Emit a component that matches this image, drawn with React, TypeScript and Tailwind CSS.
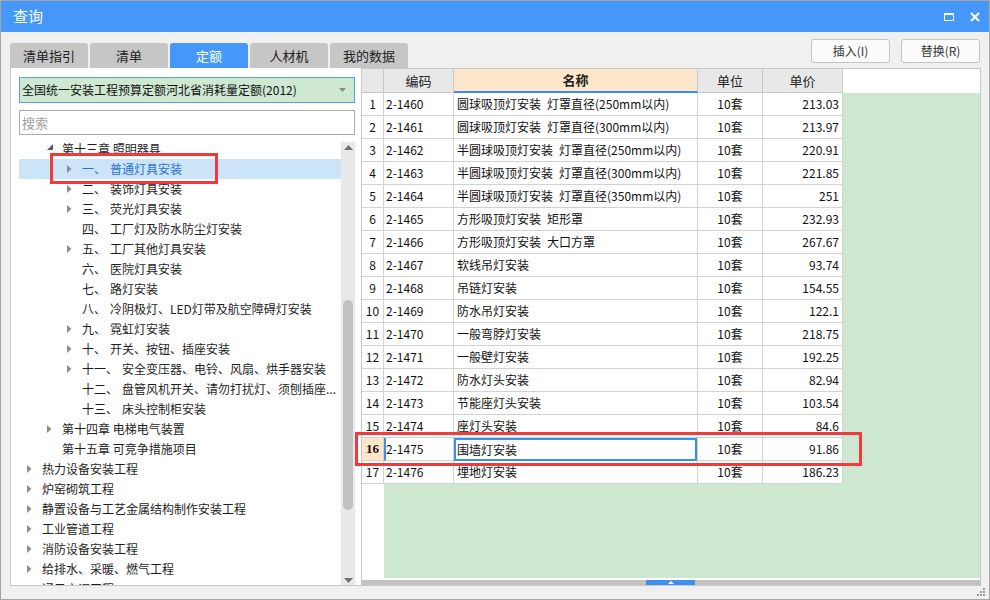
import React from 'react';

interface TreeItem {
  level: 0 | 1 | 2;
  label?: string;
  text: string;
  arrow?: 'right' | 'down';
  selected?: boolean;
}

const treeItems: TreeItem[] = [
  { level: 1, text: '第十三章 照明器具', arrow: 'down' },
  { level: 2, label: '一、', text: '普通灯具安装', arrow: 'right', selected: true },
  { level: 2, label: '二、', text: '装饰灯具安装', arrow: 'right' },
  { level: 2, label: '三、', text: '荧光灯具安装', arrow: 'right' },
  { level: 2, label: '四、', text: '工厂灯及防水防尘灯安装' },
  { level: 2, label: '五、', text: '工厂其他灯具安装', arrow: 'right' },
  { level: 2, label: '六、', text: '医院灯具安装' },
  { level: 2, label: '七、', text: '路灯安装' },
  { level: 2, label: '八、', text: '冷阴极灯、LED灯带及航空障碍灯安装' },
  { level: 2, label: '九、', text: '霓虹灯安装', arrow: 'right' },
  { level: 2, label: '十、', text: '开关、按钮、插座安装', arrow: 'right' },
  { level: 2, label: '十一、', text: '安全变压器、电铃、风扇、烘手器安装', arrow: 'right' },
  { level: 2, label: '十二、', text: '盘管风机开关、请勿打扰灯、须刨插座...' },
  { level: 2, label: '十三、', text: '床头控制柜安装' },
  { level: 1, text: '第十四章 电梯电气装置', arrow: 'right' },
  { level: 1, text: '第十五章 可竞争措施项目' },
  { level: 0, text: '热力设备安装工程', arrow: 'right' },
  { level: 0, text: '炉窑砌筑工程', arrow: 'right' },
  { level: 0, text: '静置设备与工艺金属结构制作安装工程', arrow: 'right' },
  { level: 0, text: '工业管道工程', arrow: 'right' },
  { level: 0, text: '消防设备安装工程', arrow: 'right' },
  { level: 0, text: '给排水、采暖、燃气工程', arrow: 'right' },
  { level: 0, text: '通风空调工程', arrow: 'right' },
];

// names use an en space, close to the wide space of the original grid font
const rows = [
  ['2-1460', '圆球吸顶灯安装\u2002灯罩直径(250mm以内)', '213.03'],
  ['2-1461', '圆球吸顶灯安装\u2002灯罩直径(300mm以内)', '213.97'],
  ['2-1462', '半圆球吸顶灯安装\u2002灯罩直径(250mm以内)', '220.91'],
  ['2-1463', '半圆球吸顶灯安装\u2002灯罩直径(300mm以内)', '221.85'],
  ['2-1464', '半圆球吸顶灯安装\u2002灯罩直径(350mm以内)', '251'],
  ['2-1465', '方形吸顶灯安装\u2002矩形罩', '232.93'],
  ['2-1466', '方形吸顶灯安装\u2002大口方罩', '267.67'],
  ['2-1467', '软线吊灯安装', '93.74'],
  ['2-1468', '吊链灯安装', '154.55'],
  ['2-1469', '防水吊灯安装', '122.1'],
  ['2-1470', '一般弯脖灯安装', '218.75'],
  ['2-1471', '一般壁灯安装', '192.25'],
  ['2-1472', '防水灯头安装', '82.94'],
  ['2-1473', '节能座灯头安装', '103.54'],
  ['2-1474', '座灯头安装', '84.6'],
  ['2-1475', '围墙灯安装', '91.86'],
  ['2-1476', '埋地灯安装', '186.23'],
];

const padByLevel = ['pl-[8px]', 'pl-[28px]', 'pl-[48px]'];

const Arrow = ({ dir }: { dir?: 'right' | 'down' }) => {
  if (dir === 'right') {
    return (
      <svg width="5" height="8" viewBox="0 0 5 8">
        <path d="M0 0 L4.5 4 L0 8Z" fill="#8c8c8c" />
      </svg>
    );
  }
  if (dir === 'down') {
    return (
      <svg width="6" height="6" viewBox="0 0 6 6" className="mt-[-4px]">
        <path d="M6 0 L6 6 L0 6Z" fill="#5a5a5a" />
      </svg>
    );
  }
  return null;
};

const TreeRow = ({ item }: { item: TreeItem }) => (
  <div
    className={`flex items-center h-[20px] whitespace-nowrap ${padByLevel[item.level]} ${
      item.selected ? 'bg-[#cce4f7] text-[#2a72d4]' : 'text-[#1e1e1e]'
    }`}
  >
    <span className="w-[15px] shrink-0 flex items-center">
      <Arrow dir={item.arrow} />
    </span>
    {item.label && <span>{item.label}</span>}
    <span className={item.label ? 'ml-[4px]' : ''}>{item.text}</span>
  </div>
);

const tabs = ['清单指引', '清单', '定额', '人材机', '我的数据'];

export default function App() {
  return (
    <div className="relative w-[990px] h-[600px] bg-[#f0f0f0] border border-[#a6a6a6] flex flex-col font-['Noto_Sans_CJK_SC',sans-serif] text-[12px] overflow-hidden">
      {/* Title bar */}
      <div className="h-[31px] shrink-0 bg-[#4598fa] flex items-center justify-between pl-[12px] pr-[9px]">
        <span className="text-white text-[15px]">查询</span>
        <div className="flex items-center gap-[16px]">
          <div className="w-[10px] h-[8px] border-[1.5px] border-t-[2.5px] border-white" />
          <svg width="10" height="10" viewBox="0 0 10 10">
            <path d="M1 1 L9 9 M9 1 L1 9" stroke="white" strokeWidth="2" />
          </svg>
        </div>
      </div>

      {/* Tabs + buttons */}
      <div className="h-[36px] shrink-0 flex items-end justify-between pl-[9px] pr-[9px]">
        <div className="flex gap-[2px]">
          {tabs.map((t) => (
            <div
              key={t}
              className={`w-[78px] h-[25px] rounded-t-[3px] flex items-center justify-center text-[13px] ${
                t === '定额' ? 'bg-[#4598fa] text-white' : 'bg-[#c6c6c6] text-[#222]'
              }`}
            >
              {t}
            </div>
          ))}
        </div>
        <div className="flex gap-[11px] pb-[5px]">
          <button className="w-[79px] h-[24px] bg-[#fcfcfc] border border-[#c4c4c4] rounded-[3px] text-[12px] text-[#333]">
            插入(I)
          </button>
          <button className="w-[79px] h-[24px] bg-[#fcfcfc] border border-[#c4c4c4] rounded-[3px] text-[12px] text-[#333]">
            替换(R)
          </button>
        </div>
      </div>

      {/* Main panels */}
      <div className="h-[518px] shrink-0 flex pl-[9px]">
        {/* Left panel */}
        <div className="w-[351px] shrink-0 bg-white border-l border-b border-[#c8c8c8] flex flex-col pt-[9px] pl-[8px] pr-[6px]">
          <div className="h-[26px] shrink-0 bg-[#cfe8d2] border border-[#5b9fe3] flex items-center justify-between pl-[2px] pr-[8px] text-[#111]">
            <span>全国统一安装工程预算定额河北省消耗量定额(2012)</span>
            <svg width="7" height="4" viewBox="0 0 7 4">
              <path d="M0 0 L7 0 L3.5 4Z" fill="#8a8a8a" />
            </svg>
          </div>
          <div className="h-[25px] shrink-0 mt-[7px] bg-white border border-[#ababab] flex items-center pl-[2px] text-[#a0a0a0] text-[13px]">
            搜索
          </div>
          <div className="flex-1 mt-[7px] flex overflow-hidden">
            <div className="flex-1 overflow-hidden">
              <div className="mt-[-3px]">
                {treeItems.map((it, i) => (
                  <TreeRow key={i} item={it} />
                ))}
              </div>
            </div>
            <div className="w-[14px] shrink-0 bg-[#e8e8e8] flex flex-col items-center">
              <svg width="9" height="5" viewBox="0 0 9 5" className="mt-[3px]">
                <path d="M0 5 L4.5 0 L9 5Z" fill="#707070" />
              </svg>
              <div className="w-[10px] h-[210px] mt-[150px] rounded-full bg-[#c2c2c2]" />
              <div className="flex-1" />
              <svg width="9" height="5" viewBox="0 0 9 5" className="mb-[2px]">
                <path d="M0 0 L9 0 L4.5 5Z" fill="#707070" />
              </svg>
            </div>
          </div>
        </div>

        {/* Right panel: grid */}
        <div className="w-[620px] shrink-0 bg-white border border-[#c8c8c8] flex flex-col">
          {/* Header */}
          <div className="flex h-[24px] shrink-0 text-[13px] text-[#222]">
            <div className="w-[22px] shrink-0 bg-[#e8e8e8] border-r border-b border-[#c9c9c9]" />
            <div className="w-[70px] shrink-0 bg-[#e8e8e8] border-r border-b border-[#c9c9c9] flex items-center justify-center">
              编码
            </div>
            <div className="w-[244px] shrink-0 bg-[#fde6c9] border-r border-[#c9c9c9] border-b-2 border-b-[#3b8eea] flex items-center justify-center font-bold">
              名称
            </div>
            <div className="w-[65px] shrink-0 bg-[#e8e8e8] border-r border-b border-[#c9c9c9] flex items-center justify-center">
              单位
            </div>
            <div className="w-[80px] shrink-0 bg-[#e8e8e8] border-r border-b border-[#c9c9c9] flex items-center justify-center">
              单价
            </div>
            <div className="flex-1 bg-white" />
          </div>

          {/* Data rows */}
          {rows.map((r, i) => {
            const sel = i === 15;
            return (
              <div key={r[0]} className="flex h-[23px] shrink-0 text-[#111]">
                <div
                  className={`w-[22px] shrink-0 border-r border-b border-[#d2d2d2] flex items-center justify-center ${
                    sel ? "bg-[#fde6c9] font-bold text-[13px] font-['Liberation_Serif',serif]" : ''
                  }`}
                >
                  {i + 1}
                </div>
                <div
                  className={`w-[70px] shrink-0 border-r border-b border-[#d2d2d2] flex items-center ${
                    sel ? 'border-l-2 border-l-[#3b8eea]' : 'pl-[2px]'
                  }`}
                >
                  {r[0]}
                </div>
                <div className="w-[244px] shrink-0 border-r border-b border-[#d2d2d2] flex">
                  <div
                    className={`flex-1 flex items-center whitespace-nowrap ${
                      sel ? 'border-2 border-[#3b8eea] pl-[1px] mb-[-1px]' : 'pl-[3px]'
                    }`}
                  >
                    {r[1]}
                  </div>
                </div>
                <div className="w-[65px] shrink-0 border-r border-b border-[#d2d2d2] flex items-center justify-center">
                  10套
                </div>
                <div className="w-[80px] shrink-0 border-r border-b border-[#d2d2d2] flex items-center justify-end pr-[3px]">
                  {r[2]}
                </div>
                <div className="flex-1 bg-[#cde7d0]" />
              </div>
            );
          })}

          {/* Filler */}
          <div className="flex-1 flex">
            <div className="w-[22px] shrink-0 bg-white" />
            <div className="flex-1 bg-[#cde7d0] mb-[2px]" />
          </div>

          {/* Horizontal scrollbar */}
          <div className="h-[5px] shrink-0 bg-[#c2c2c2] flex">
            <div className="w-[284px] shrink-0" />
            <div className="w-[49px] shrink-0 bg-[#3d8ff0] flex items-center justify-center">
              <svg width="6" height="3" viewBox="0 0 6 3">
                <path d="M0 3 L3 0 L6 3Z" fill="white" />
              </svg>
            </div>
          </div>
        </div>
      </div>

      {/* Bottom strip with resize grip */}
      <div className="flex-1 flex justify-end items-start pr-[3px] pt-[2px]">
        <svg width="9" height="9" viewBox="0 0 9 9">
          <rect x="6" y="0" width="2" height="2" fill="#9a9a9a" />
          <rect x="3" y="3" width="2" height="2" fill="#9a9a9a" />
          <rect x="6" y="3" width="2" height="2" fill="#9a9a9a" />
          <rect x="0" y="6" width="2" height="2" fill="#9a9a9a" />
          <rect x="3" y="6" width="2" height="2" fill="#9a9a9a" />
          <rect x="6" y="6" width="2" height="2" fill="#9a9a9a" />
        </svg>
      </div>

      {/* Red annotation boxes */}
      <div className="absolute left-[49px] top-[152px] w-[168px] h-[31px] border-[3px] border-[#f23a3a] pointer-events-none" />
      <div className="absolute left-[354px] top-[431px] w-[507px] h-[34px] border-[3px] border-[#f23a3a] pointer-events-none" />
    </div>
  );
}
